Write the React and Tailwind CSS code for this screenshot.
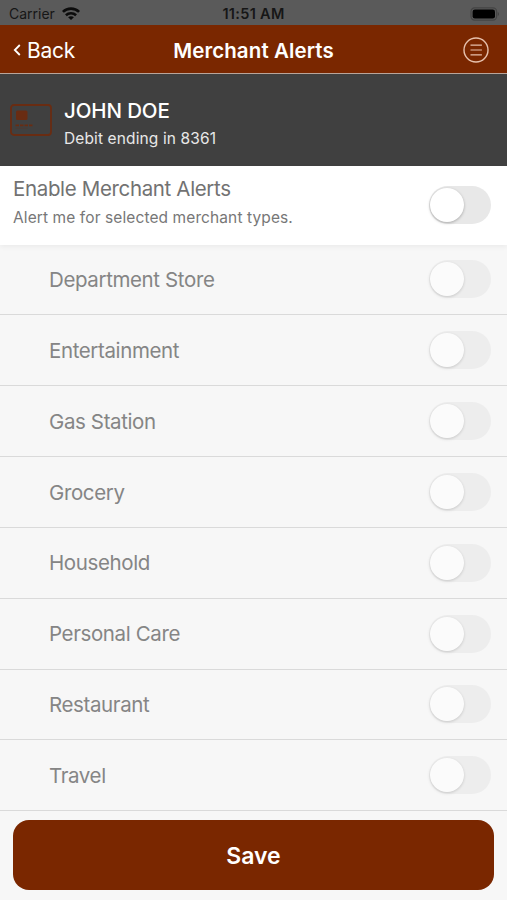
import { useState } from "react"

const merchantTypes = [
    "Department Store",
    "Entertainment",
    "Gas Station",
    "Grocery",
    "Household",
    "Personal Care",
    "Restaurant",
    "Travel",
]

// ─── Icons ───

const WifiIcon = () => (
    <svg width="18" height="13" viewBox="0 0 18 13" fill="none" stroke="#0c0c0c" strokeWidth="2.6">
        <path d="M.9 4.9C5.3.5 12.7.5 17.1 4.9" />
        <path d="M3.9 8.3c2.9-2.7 7.3-2.7 10.2 0" />
        <path d="M9 12.9 6.1 10.2c1.6-1.4 4.2-1.4 5.8 0z" fill="#0c0c0c" stroke="none" />
    </svg>
)

const BatteryIcon = () => (
    <svg width="30" height="14" viewBox="0 0 30 14">
        <rect x="1" y="0.9" width="25.6" height="12.2" rx="3.6" fill="none" stroke="#444" strokeWidth="1.2" />
        <rect x="2.6" y="2.4" width="22.4" height="9.2" rx="2.3" fill="#000" />
        <path d="M27.8 5v4c1.4-.6 1.4-3.4 0-4z" fill="#3c3c3c" />
    </svg>
)

const MenuIcon = () => (
    <svg width="26" height="26" viewBox="0 0 26 26" fill="none" stroke="#e6c0ac" strokeWidth="1.2">
        <circle cx="13" cy="13" r="12" strokeWidth="1.4" />
        <path d="M7.5 8.2h11.4M7.5 13h11.4M7.5 17.8h11.4" />
    </svg>
)

const CardIcon = () => (
    <svg width="42" height="32" viewBox="0 0 42 32" fill="none" stroke="#692c12">
        <rect x="1" y="1" width="40" height="30" rx="3" strokeWidth="1.8" />
        <rect x="6" y="6.5" width="11.5" height="9.5" rx="1.5" fill="#692c12" stroke="none" />
        <path d="M5.5 21.3h17" strokeWidth="1.8" strokeDasharray="3.5 1" />
        <path d="M5.5 24.3h12" strokeWidth="0.6" opacity="0.5" />
    </svg>
)

// ─── Toggle ───

const Toggle = ({ label, checked, disabled = false, onChange }) => (
    <button
        role="switch"
        aria-label={label}
        aria-checked={checked}
        disabled={disabled}
        onClick={onChange}
        className={`flex h-[38px] w-[62px] shrink-0 items-center rounded-full px-px ${checked ? "justify-end bg-[#7a2700]" : "bg-[#e8e8e8]"} ${disabled ? "opacity-60" : ""}`}
    >
        <span className="size-[34px] rounded-full bg-white shadow-[0_1px_3px_rgba(0,0,0,0.28)]" />
    </button>
)

// ─── MerchantRow ───

const MerchantRow = ({ name, enabled, checked, onChange }) => (
    <li className="flex h-[70.85px] items-center justify-between border-b border-[#dadada] pr-4 pl-[49px]">
        <span className="pt-[2px] text-[20.5px] tracking-[-0.38px] text-[#858585]">{name}</span>
        <Toggle label={name} checked={checked} disabled={!enabled} onChange={onChange} />
    </li>
)

const App = () => {
    const [enabled, setEnabled] = useState(false)
    const [selected, setSelected] = useState([])

    const toggleType = (name) =>
        setSelected((prev) =>
            prev.includes(name) ? prev.filter((n) => n !== name) : [...prev, name]
        )

    return (
        <div className="flex h-[900px] w-[507px] flex-col overflow-hidden bg-[#f7f7f7] font-['Inter',sans-serif]">

            {/* Status bar */}
            <div className="grid h-[25px] shrink-0 grid-cols-[1fr_auto_1fr] items-center bg-[#5a5a5a] pt-[2px] pr-[7px] pl-[7px] text-[14px] leading-none text-[#161616]">
                <div className="flex items-center gap-[7px] pl-[2px]">
                    <span className="pt-px">Carrier</span>
                    <WifiIcon />
                </div>
                <span className="pt-px text-[14.5px] font-semibold tracking-[0.3px]">11:51 AM</span>
                <div className="flex justify-end">
                    <BatteryIcon />
                </div>
            </div>

            {/* Navigation */}
            <header className="grid h-[49px] shrink-0 grid-cols-[1fr_auto_1fr] items-center border-b border-[#b9a59b] bg-[#7a2700] px-[13px] pt-[2px] text-white">
                <button className="flex items-center gap-1.5 text-[21px] tracking-[-0.25px]">
                    <svg width="8" height="12" viewBox="0 0 8 12" fill="none" stroke="white" strokeWidth="1.8">
                        <path d="M6.8 1 1.8 6l5 5" />
                    </svg>
                    <span className="pt-px">Back</span>
                </button>
                <h1 className="pt-[2px] text-[20.5px] font-semibold tracking-[0.1px]">Merchant Alerts</h1>
                <button aria-label="Menu" className="mr-[5px] justify-self-end">
                    <MenuIcon />
                </button>
            </header>

            {/* Card */}
            <section className="flex h-[92px] shrink-0 items-center gap-3 bg-[#404040] pl-[10px]">
                <CardIcon />
                <div className="pt-[8px] text-white">
                    <p className="text-[20.5px] leading-[29px] font-medium tracking-[-0.12px]">JOHN DOE</p>
                    <p className="text-[15.5px] leading-[28px] tracking-[0.12px] text-[#e8e8e8]">Debit ending in 8361</p>
                </div>
            </section>

            {/* Master switch */}
            <section className="z-10 flex h-[78.5px] shrink-0 items-center justify-between bg-white pr-4 pl-[13px] shadow-[0_2px_5px_rgba(0,0,0,0.05)]">
                <div className="pb-[5px]">
                    <p className="text-[20.5px] leading-[29px] tracking-[-0.35px] text-[#727272]">Enable Merchant Alerts</p>
                    <p className="text-[15.5px] leading-[29px] tracking-[0.1px] text-[#777]">Alert me for selected merchant types.</p>
                </div>
                <Toggle label="Enable Merchant Alerts" checked={enabled} onChange={() => setEnabled(!enabled)} />
            </section>

            <ul className="shrink-0">
                {merchantTypes.map((name) => (
                    <MerchantRow
                        key={name}
                        name={name}
                        enabled={enabled}
                        checked={selected.includes(name)}
                        onChange={() => toggleType(name)}
                    />
                ))}
            </ul>

            <div className="px-[13px] pt-[9px]">
                <button className="h-[69.5px] w-full rounded-[16px] bg-[#7a2700] pt-[2px] text-[23px] font-semibold text-white">
                    Save
                </button>
            </div>
        </div>
    )
}

export default App
